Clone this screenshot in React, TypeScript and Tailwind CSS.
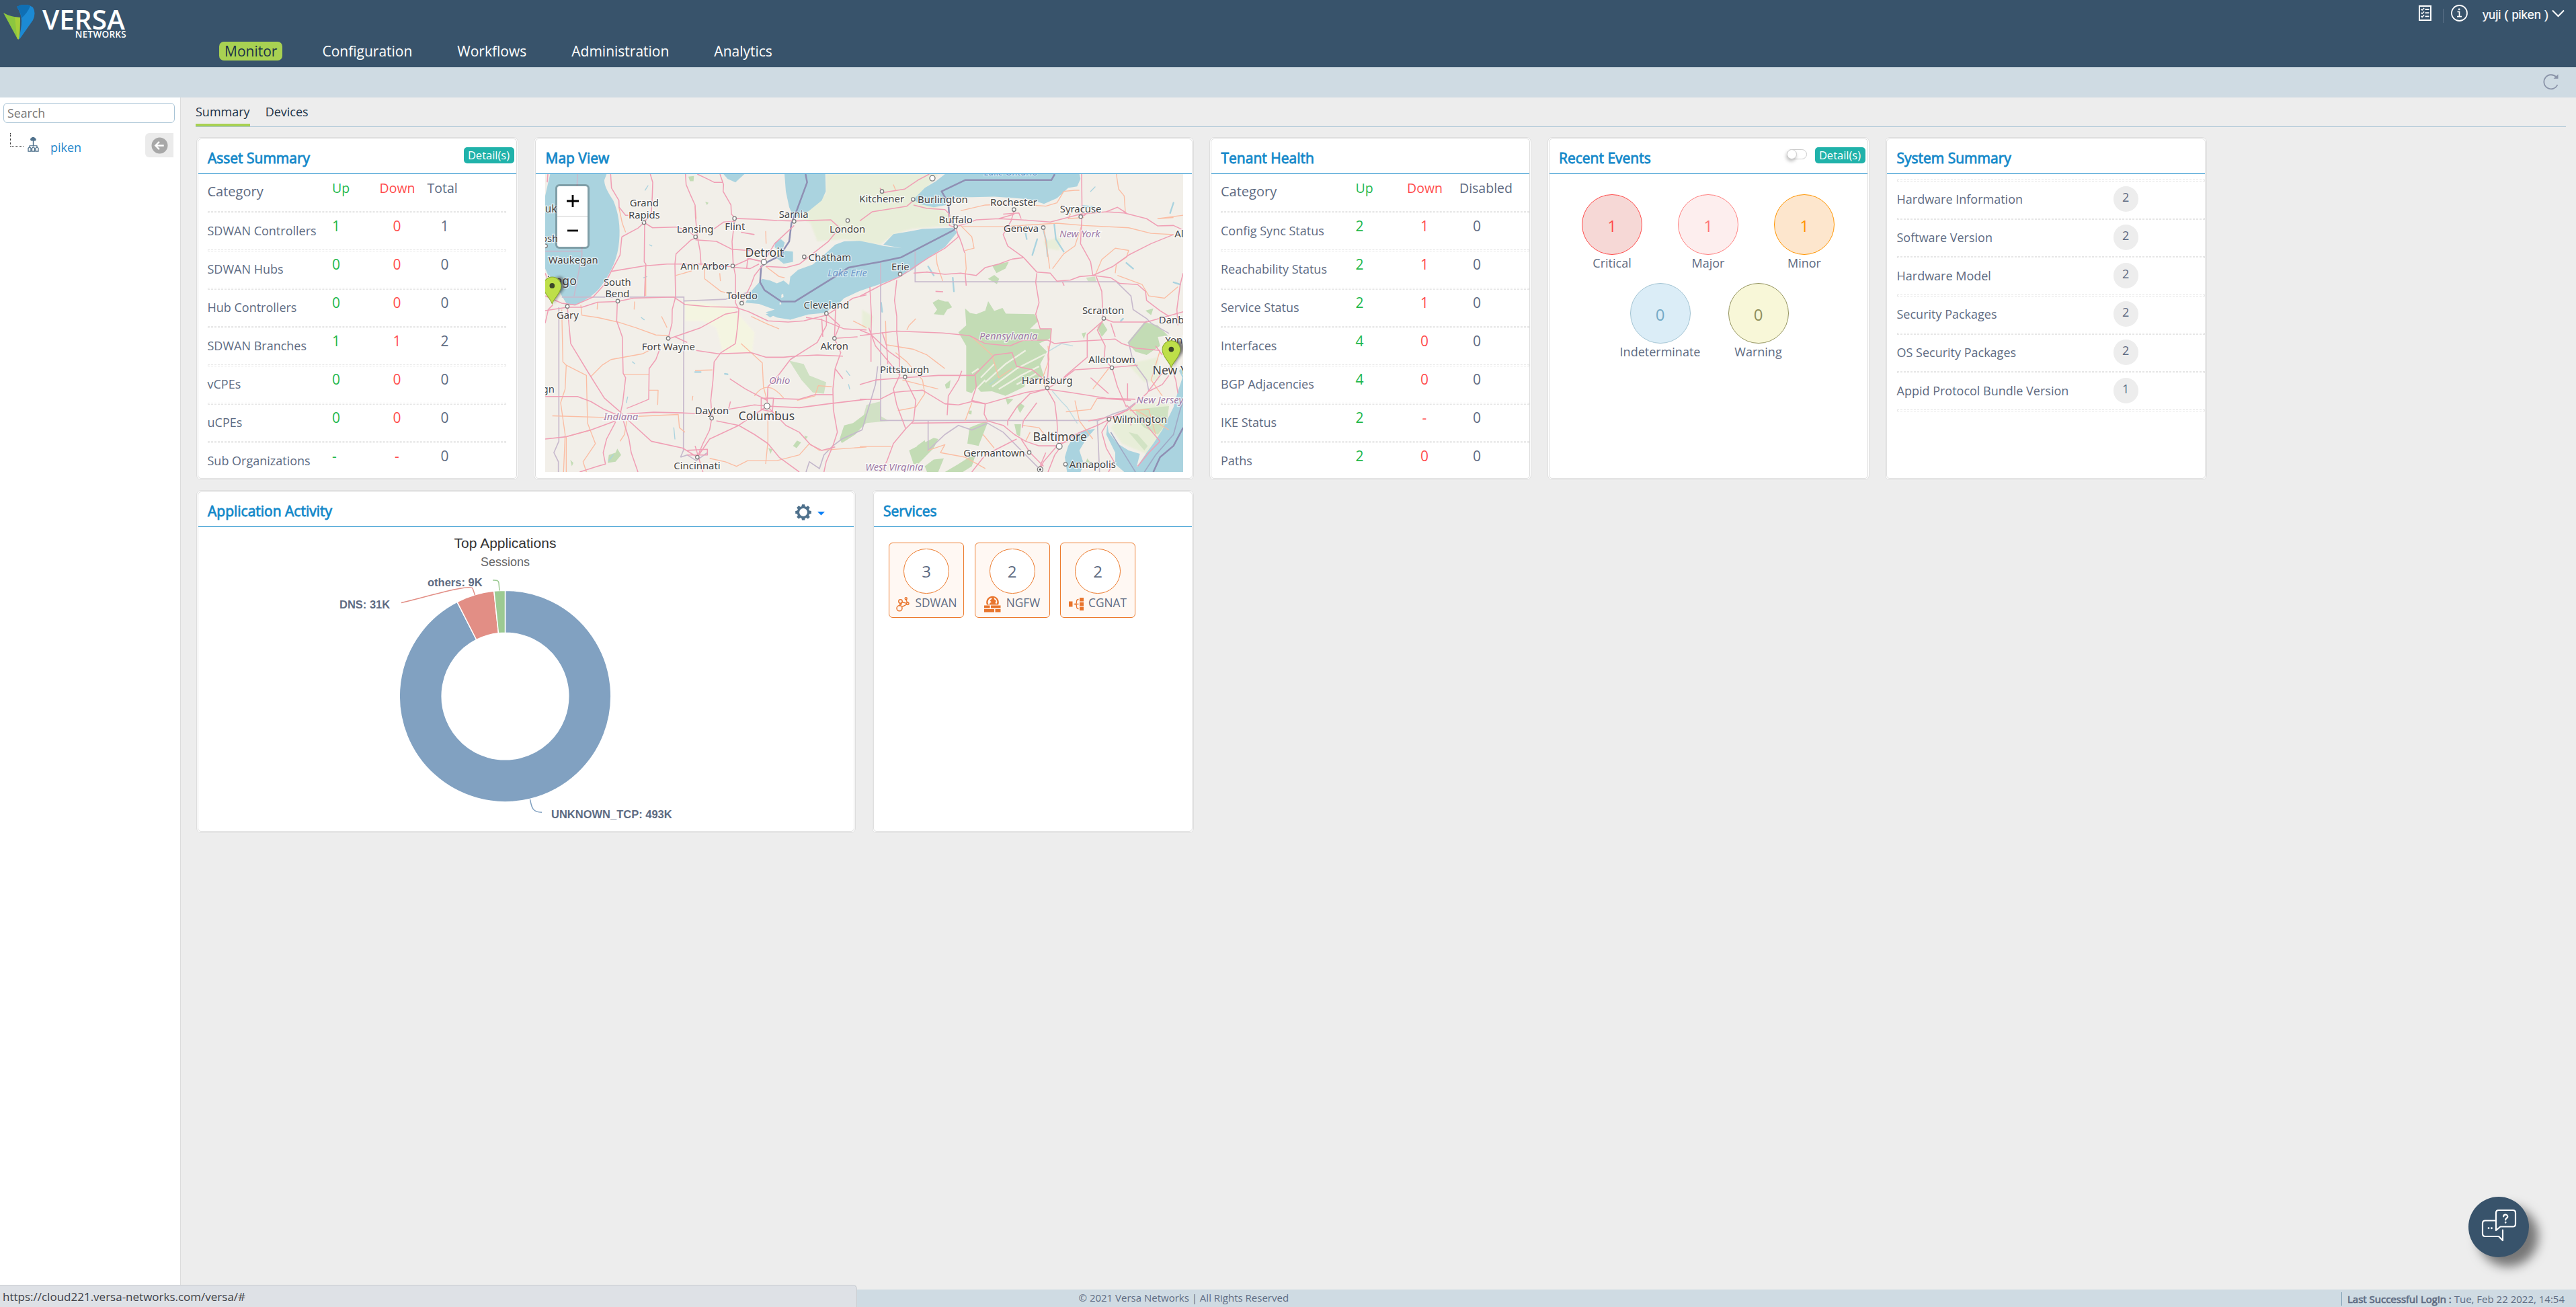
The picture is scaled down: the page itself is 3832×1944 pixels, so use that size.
import React from "react";

const DASH = "h-[3px] shrink-0 border border-dashed border-[#e6e6e6]";

function Logo() {
  return (
    <div className="flex pl-[5px] pt-[7px]">
      <svg width="47" height="52" viewBox="0 0 47 52">
        <path d="M0 12 Q10 18 25 19 L24 50 Q22 53 20 49 Z" fill="#8cc63f" />
        <path d="M17 18.600 L25 19 L24 50 Q22 53 20.500 50 Z" fill="#a6ce39" />
        <path d="M20 3 Q34 -4 44 4 Q49 12 44 23 L25 50 L23 51 Q27 35 27 24 Q27 14 20 3Z" fill="#1c8ad4" />
        <path d="M20 3 Q32 -3 40 2 Q36 12 27 20 Q26 11 20 3Z" fill="#0f6fb4" />
      </svg>
      <div className="ml-[11px] flex w-[125px] flex-col items-end text-white">
        <div className="h-[36px] w-full text-[40.5px] leading-[43px] font-semibold">VERSA</div>
        <div className="text-[13.5px] leading-[17px] font-semibold tracking-[0.3px]">NETWORKS</div>
      </div>
    </div>
  );
}

function Header() {
  return (
    <header className="flex h-[100px] shrink-0 bg-[#38536b]">
      <div className="w-[326px]">
        <Logo />
      </div>
      <nav className="mt-[62px] flex h-[28px] gap-[51px] text-[21px] leading-[28px] text-white">
        {["Monitor", "Configuration", "Workflows", "Administration", "Analytics"].map((t, i) => (
          <span key={t} className={i === 0 ? "rounded-[7px] bg-[#a8d152] px-[8px] text-[#1d3447]" : "px-[8px]"}>
            {t}
          </span>
        ))}
      </nav>
      <div className="ml-auto flex pr-[17px] text-white">
        <svg className="mt-[8px]" width="19" height="23" viewBox="0 0 19 23" fill="none" stroke="#fff">
          <rect x="1" y="1" width="17" height="21" strokeWidth="2" />
          <path d="M9.500 6h6M9.500 11.200h6M9.500 16.400h6" strokeWidth="1.800" />
          <path d="M3.600 5.500l1.500 1.500 3-3M3.600 10.700l1.500 1.500 3-3M3.600 15.900l1.500 1.500 3-3" strokeWidth="1.500" />
        </svg>
        <div className="mt-[13px] ml-[17px] h-[21px] w-px bg-[#5b7187]" />
        <svg className="mt-[6.5px] ml-[11px]" width="25" height="25" viewBox="0 0 25 25" fill="none" stroke="#fff">
          <circle cx="12.500" cy="12.500" r="11.500" strokeWidth="1.800" />
          <path d="M9.500 10.500h3v7M9 17.600h7" strokeWidth="1.700" />
          <circle cx="12.200" cy="6.900" r="1.400" fill="#fff" stroke="none" />
        </svg>
        <span className="mt-[8px] ml-[22px] h-[28px] w-[98px] font-['Liberation_Sans',sans-serif] text-[18.2px] leading-[28px] whitespace-nowrap [-webkit-text-stroke:0.2px_#fff]">
          yuji ( piken )
        </span>
        <svg className="mt-[14px] ml-[5px]" width="19" height="12" viewBox="0 0 19 12" fill="none" stroke="#fff" strokeWidth="2">
          <path d="M1 1.500l8.500 8.500L18 1.500" />
        </svg>
      </div>
    </header>
  );
}

function Sidebar() {
  return (
    <aside className="flex w-[269px] shrink-0 flex-col border-r border-[#dcdcdc] bg-white">
      <div className="mt-[8px] ml-[5px] h-[30px] w-[255px] rounded-[6px] border border-[#a9c4d6] pl-[5px] text-[17.7px] leading-[29px] text-[#757575]">
        Search
      </div>
      <div className="mt-[15px] flex h-[36px] pl-[15px]">
        <div className="h-[20px] w-[20px] border-b border-l border-dotted border-[#333]" />
        <svg className="mt-[6px] ml-[6px]" width="17" height="22" viewBox="0 0 17 22" fill="#4f718c">
          <path d="M5.500 5.500a2.300 2.300 0 0 1 0-4.300A3.300 3.300 0 0 1 11 1.200a2.300 2.300 0 0 1 .500 4.300z" />
          <path d="M7.800 5h1.500v8H7.800zM2.500 12.300h12v1h-12zM2.500 12.300h1v3h-1zM13.500 12.300h1v3h-1z" />
          <path d="M1 21v-4.500l2-2 2 2V21zM6.500 21v-4.500l2-2 2 2V21zM12 21v-4.500l2-2 2 2V21z" fill="none" stroke="#4f718c" strokeWidth="1.300" />
        </svg>
        <span className="ml-[17px] w-[141px] text-[18px] leading-[42px] text-[#1f87cc]">piken</span>
        <div className="flex h-[36px] w-[42px] items-center justify-center rounded-l-[6px] bg-[#ebebeb]">
          <svg width="25" height="25" viewBox="0 0 24 24">
            <circle cx="12" cy="12" r="11.500" fill="#a8a8a8" />
            <path d="M18 12H6.500M11.500 6.500L6 12l5.500 5.500" fill="none" stroke="#fff" strokeWidth="2.200" />
          </svg>
        </div>
      </div>
    </aside>
  );
}

function Card({ title, wide, tools, children }: { title: string; wide?: boolean; tools?: React.ReactNode; children?: React.ReactNode }) {
  return (
    <section
      className={
        (wide ? "w-[981.5px]" : "w-[479px]") +
        " flex h-[509.5px] shrink-0 flex-col overflow-hidden rounded-[7px] border-[3px] border-double border-[#dedede] bg-white"
      }
    >
      <div className="flex h-[52px] shrink-0 border-b border-[#1288c9] pl-[14.5px]">
        <h2 className="text-[21px] leading-[56px] text-[#1288c9] [-webkit-text-stroke:0.8px_#1288c9]">{title}</h2>
        {tools && <div className="ml-auto flex">{tools}</div>}
      </div>
      {children}
    </section>
  );
}

function Details() {
  return (
    <span className="mt-[12px] mr-[3px] h-[24px] w-[75px] rounded-[5px] bg-[#20b2aa] text-center text-[16.5px] leading-[24px] text-white">
      Detail(s)
    </span>
  );
}

type Row = [string, string, string, string];

function StatTable({ rows, last, grid, full }: { rows: Row[]; last: string; grid: string; full?: boolean }) {
  return (
    <div className={full ? "pl-[14px] text-[#5e6b82]" : "pr-[15px] pl-[14px] text-[#5e6b82]"}>
      <div className={"grid h-[54.5px] " + grid}>
        <span className="text-[20px] leading-[52px]">Category</span>
        <span className="text-[19.5px] leading-[41.5px] text-[#1fb84b]">Up</span>
        <span className="text-[19.5px] leading-[41.5px] text-[#ff4b4b]">Down</span>
        <span className="text-[19.5px] leading-[41.5px]">{last}</span>
      </div>
      {rows.map((r) => (
        <React.Fragment key={r[0]}>
          <div className={DASH} />
          <div className={"grid h-[54px] " + grid}>
            <span className="text-[18px] leading-[53px]">{r[0]}</span>
            <span className="text-[21px] leading-[39px] text-[#1fb84b]">{r[1]}</span>
            <span className="w-[52px] text-center text-[21px] leading-[39px] text-[#ff4b4b]">{r[2]}</span>
            <span className="w-[52px] text-center text-[21px] leading-[39px]">{r[3]}</span>
          </div>
        </React.Fragment>
      ))}
    </div>
  );
}

const ASSETS: Row[] = [
  ["SDWAN Controllers", "1", "0", "1"],
  ["SDWAN Hubs", "0", "0", "0"],
  ["Hub Controllers", "0", "0", "0"],
  ["SDWAN Branches", "1", "1", "2"],
  ["vCPEs", "0", "0", "0"],
  ["uCPEs", "0", "0", "0"],
  ["Sub Organizations", "-", "-", "0"],
];

const TENANT: Row[] = [
  ["Config Sync Status", "2", "1", "0"],
  ["Reachability Status", "2", "1", "0"],
  ["Service Status", "2", "1", "0"],
  ["Interfaces", "4", "0", "0"],
  ["BGP Adjacencies", "4", "0", "0"],
  ["IKE Status", "2", "-", "0"],
  ["Paths", "2", "0", "0"],
];

/* ---------- Map ---------- */

type Label = [number, number, string, number?];
const CITIES: Label[] = [
  [508, 345, "Grand"], [508, 398, "Rapids"], [735, 461, "Lansing"], [913, 450, "Flint"], [1175, 395, "Sarnia"],
  [1415, 462, "London"], [1045, 567, "Detroit", 52.700], [1336, 585, "Chatham"], [777, 623, "Ann Arbor"],
  [191, 598, "Waukegan"], [388, 694, "South"], [388, 747, "Bend"], [944, 755, "Toledo"], [1321, 796, "Cleveland"],
  [166, 840, "Gary"], [616, 979, "Fort Wayne"], [1357, 975, "Akron"], [810, 1260, "Dayton"], [1054, 1288, "Columbus", 52.700],
  [744, 1502, "Cincinnati"], [92, 372, "uk", 46], [86, 502, "osh"], [80, 1166, "gn"], [140, 691, "icago", 52.700],
  [1568, 329, "Kitchener"], [1840, 332, "Burlington"], [1898, 419, "Buffalo"], [2157, 343, "Rochester"], [2456, 374, "Syracuse"],
  [2190, 459, "Geneva"], [2946, 482, "Albany"], [1651, 626, "Erie"], [2556, 821, "Scranton"], [2895, 860, "Danbury"],
  [2916, 950, "Yonkers"], [2595, 1037, "Allentown"], [1670, 1079, "Pittsburgh"], [2306, 1126, "Harrisburg"],
  [2893, 1085, "New York", 52.700], [2720, 1298, "Wilmington"], [2363, 1379, "Baltimore", 52.700], [2070, 1448, "Germantown"],
  [2509, 1498, "Annapolis"],
];
const REGIONS: Label[] = [
  [404, 1286, "Indiana"], [1112, 1127, "Ohio"], [2452, 482, "New York"], [2134, 931, "Pennsylvania"], [2809, 1212, "New Jersey"],
  [1624, 1509, "West Virginia"],
];
const DOTS: [number, number, number?][] = [
  [507, 417], [737, 480], [911, 399], [1177, 412], [1416, 408], [1042, 591, 12], [1222, 568], [903, 608], [390, 763], [943, 772],
  [1321, 817], [165, 786], [615, 927], [1357, 927], [809, 1278], [1056, 1225, 13], [745, 1450], [68, 520], [1794, 222, 12],
  [1569, 280], [1708, 315], [1898, 435], [2158, 360], [2456, 391], [2289, 439], [1650, 644], [2559, 839], [2595, 1056],
  [1672, 1097], [2307, 1145], [2582, 1283], [2360, 1402, 13], [2226, 1429], [2388, 1481], [2275, 1504, 12],
];

const ROADS_W = [
  "M358,204L362,265L395,320L396,350L425,385L437,385",
  "M535,204L546,240L544,300L540,370L510,415L508,590L515,600L509,742",
  "M408,480L480,442L508,417L545,440L650,437",
  "M692,204L695,250L712,290L735,340L737,395L745,480L757,540L762,605",
  "M745,204L790,225L820,240L858,240M846,204L862,250L860,280L895,340L897,380L915,400L905,460L900,500L905,600L915,650L915,770L930,800L925,870L915,950",
  "M911,399L1020,403L1100,408L1177,410L1340,405L1380,440L1330,500L1200,600L1140,615L1050,610",
  "M737,485L715,495L650,555L645,600L648,745L633,800L632,860L615,927",
  "M737,493L830,500L900,535L1042,545M820,445L862,415L910,412M650,437L700,450L737,480",
  "M408,480L400,560L362,630L330,690L280,745L200,780L140,772L66,740",
  "M362,632L508,608L610,600L770,600L850,610L903,610L980,576L1042,590L1090,510L1177,430",
  "M66,805L165,790L230,790L300,768L388,765L460,750L640,745L690,778L800,788L915,790L975,810L1060,850L1150,855L1220,850L1321,825L1440,750L1500,735",
  "M912,615L980,620L1020,600M1040,600L1000,650L985,690L945,770M1000,470L940,460M1042,590L970,575L965,620",
  "M615,930L760,880L870,820L925,810M645,920L700,945",
  "M915,950L850,990L820,1030L815,1110L805,1200L810,1270",
  "M740,980L840,995L985,990L1050,1010L1130,1010L1180,1005L1280,1000L1395,1005",
  "M165,790L180,950L260,1080L330,1190L400,1250L440,1290L540,1380L680,1410L745,1450",
  "M66,1183L210,1183L270,1205L330,1240L390,1265M66,1370L160,1360L270,1330L380,1290",
  "M388,765L385,850L410,920L414,1080L425,1100L412,1210L400,1265M575,980L560,1020L530,1060L528,1195L480,1215L430,1235",
  "M430,1260L550,1252L680,1255L800,1260M880,1240L1000,1220L1056,1225L1200,1232L1330,1215L1500,1195",
  "M380,1295L340,1370L325,1430L335,1480L300,1490L220,1515M415,1290L440,1370L450,1430L480,1515",
  "M809,1280L800,1330L770,1390L745,1450M830,1290L930,1310L1000,1350L1060,1390L1110,1450L1200,1515",
  "M1056,1225L930,1310L800,1370L745,1450M1056,1225L1140,1310L1200,1340L1250,1395L1300,1420L1360,1405",
  "M1056,1225L1060,1140L1110,1085L1160,1020L1280,945L1321,870L1321,817M890,1105L960,1150L1056,1200M1056,1190L1200,1195L1270,1175L1350,1175",
  "M1357,927L1362,800M1357,927L1385,990L1360,1060L1350,1150L1352,1240L1370,1340L1350,1400L1320,1470L1310,1515",
  "M1230,835L1300,845L1400,885L1500,890M1321,817L1380,870L1357,927L1460,920M1300,840L1305,920",
  "M700,1420L790,1415L790,1440L700,1440M735,1400L770,1515M1030,1190L1085,1190L1080,1250L1030,1240Z",
  "M78,204L75,240M66,640L90,700M66,860L80,800L100,780M1360,1060L1395,1105M885,1235L893,1205",
];
const ROADS_E = [
  "M0,410L55,370L210,345L240,320M90,265L105,285L200,270L260,230L310,204M240,340L300,355L380,360L400,380L400,430L430,440",
  "M430,440L440,480L380,530L310,570L240,615L180,655L100,690L0,742M440,470L455,510L468,550M430,435L480,420L520,405L620,400L690,380M520,405L620,400L720,405L850,415L985,380L1100,370L1180,375L1280,400L1330,432L1400,430L1443,450",
  "M690,360L675,410L640,470L660,520L730,570L790,635L850,640L880,675L940,670L980,655L1040,650L1120,660L1160,685L1240,690L1275,720L1280,760L1340,805L1380,830",
  "M240,640L300,635L380,645L450,640L520,650L560,615L620,600L680,578L730,572M470,640L475,695M45,700L52,830L50,920L50,1030",
  "M990,204L992,380L985,510L1030,590L1040,650L1130,610L1200,560L1300,510L1400,470M1100,370L1150,350L1190,375M985,395L1010,380M640,380L710,375L720,400",
  "M790,640L785,680L800,770L785,820L805,885L855,885L850,945L840,1000L842,1050L835,1145M1055,655L1080,720L1085,830L1090,840L1130,855L1280,855L1443,810",
  "M165,670L155,760L165,830L165,900L175,990L178,1090L150,1150L165,1220L205,1325L150,1390L120,1470L90,1515",
  "M0,915L120,900L165,895L370,903L490,915L560,950L670,960L730,935L840,935L870,950L960,940L1060,935L1140,930L1170,950L1230,970L1340,980",
  "M0,1130L70,1110L200,1100L350,1090L440,1090L510,1090L600,1000L680,990L700,1050L770,1065L835,1120M0,1195L90,1195L150,1165L200,1160L280,1155L380,1215L440,1220L500,1205L560,1215L650,1190L740,1165L835,1150L940,1165L1100,1190L1230,1195",
  "M515,1090L520,1140L500,1200L560,1215L555,1260L570,1290L640,1310L690,1350L740,1380L800,1400L890,1400M390,1265L395,1180L440,1110L455,1070",
  "M230,1300L400,1298L570,1295M200,1100L250,1200L240,1290L205,1325M100,900L120,960L125,1040M0,890L50,910L130,985L180,1020M40,880L70,960L180,1090",
  "M835,1150L870,1210L880,1290L885,1390M835,1150L760,1170L700,1230L660,1290L660,1310M835,1150L900,1110L960,1065L1125,1055L1240,1045M890,1400L960,1350L1060,1310L1200,1240L1280,1170L1340,1090L1390,1050",
  "M1090,840L1060,890L1095,960L1090,1020L1125,1055L1150,1140L1190,1230M1120,860L1140,920M1085,850L1015,910L1015,1010L920,1090L910,1100",
  "M1200,1240L1130,1270L1020,1290M1190,1220L1280,1310L1340,1380M1110,1290L1080,1340L1100,1410L1135,1470L1110,1515M1340,1380L1290,1430L1240,1490",
  "M880,1400L820,1470L800,1515M900,1400L870,1440L840,1515M830,1430L800,1500M890,1390L930,1380M720,1370L760,1430L820,1490M560,1440L620,1410L700,1370M500,1515L560,1440",
  "M1390,1050L1410,1110L1420,1170M1380,1090L1350,1130L1290,1160M1420,870L1415,800L1430,690L1443,640M1320,960L1350,1000M1210,1270L1210,1310",
  "M725,1320L730,1290L790,1210M1030,1100L1110,1170M1195,1125L1195,1200M1060,1190L1210,1200M905,680L912,695M338,720L372,722",
];
const ORANGE_W = [
  "M395,350L410,420L425,460M515,600L515,740M225,780L230,825L300,835L390,855L470,880L560,912L615,915",
  "M140,800L145,1030L160,1045L155,1150L135,1210L155,1350L148,1515M160,1045L250,1090L255,1300L290,1390L235,1470L250,1515",
  "M270,1095L320,1045L360,1020L500,995L530,980M98,1268L330,1275L400,1272M414,1085L530,1085M480,1270L660,1262L665,1320L690,1340",
  "M775,600L778,665L850,720L910,735M650,650L720,630M740,400L735,345M1050,610L1110,655L1135,660M845,640L848,675M1050,455L1052,510",
  "M530,1155L570,1155L568,1220M735,1068L812,1066M940,950L985,990L1035,1035L1040,1140L1056,1200M1000,1180Q1056,1100 1130,1190",
  "M1060,1250L1060,1380L1050,1480M800,1455L870,1470L920,1490L970,1465L1100,1465L1200,1440L1245,1390L1290,1420L1500,1405",
  "M1345,1140L1285,1135L1270,1180L1190,1200M985,830L1060,865L1110,885M1440,850L1500,880M430,1290L420,1350L400,1380M300,768L298,800M465,765L463,800M270,1330L160,1360L160,1515M725,1180L722,1200M585,830L610,880",
];
const ORANGE_E = [
  "M340,550L345,600L370,675M470,550L475,620L470,650M450,430L500,480L510,530L470,540M450,435L640,435L720,430L880,420L1000,430L1200,440L1300,465L1400,470",
  "M450,365L560,340L700,335L830,345L880,330L910,280L960,275L980,275M820,440L835,530L848,620M990,430L960,520L910,555L860,620M1145,204L1155,270L1180,300L1185,370M1050,650L1080,580L1140,530L1200,540L1190,570L1145,600L1140,640",
  "M115,850L118,955L240,975L300,1000L340,1030L380,1060M160,990L210,1030L280,1110L290,1170L250,1230L170,1245M190,1110L350,1150M500,1210L470,1290M500,920L590,1000L620,1100L680,1060",
  "M900,340L940,380L930,400L1000,395M1400,395L1330,400L1443,385M1150,650L1260,690L1290,740L1360,750L1420,700M725,1310L800,1320L840,1370M305,1420L380,1395L360,1430L470,1450L560,1500M0,1403L140,1403",
  "M840,960L845,1020L820,1090L825,1140M960,1200L980,1290L1040,1370M1110,1060L1040,1150M1340,980L1300,1110L1350,1180M1230,1240L1380,1330M550,1350L600,1410M150,250L160,275",
  "M1060,1190L1030,1240L920,1250M1205,1245L1290,1240L1320,1350M250,840L220,870L210,890M740,1380L760,1340",
];

function Pin({ x, y }: { x: number; y: number }) {
  return (
    <g transform={`translate(${x} ${y})`}>
      <path d="M8,0C20,-40 62,-60 56,-95C50,-125 20,-125 5,-100Z" fill="#222" opacity="0.6" filter="url(#soft)" />
      <path d="M0,0C-10,-28 -40,-48 -40,-78A40,40 0 0 1 40,-78C40,-48 10,-28 0,0Z" fill="#bedf49" stroke="#8aa82f" strokeWidth="3" />
      <circle cx="0" cy="-80" r="11.500" fill="#3d4629" />
    </g>
  );
}

function MapCanvas() {
  return (
    <svg width="949" height="443" viewBox="66 204 2847 1311" preserveAspectRatio="none" className="block">
      <defs>
        <filter id="soft" x="-50%" y="-50%" width="200%" height="200%">
          <feGaussianBlur stdDeviation="7" />
        </filter>
        <filter id="edge" x="-5%" y="-5%" width="110%" height="110%">
          <feGaussianBlur stdDeviation="3" />
        </filter>
      </defs>
      <rect x="66" y="204" width="2847" height="1311" fill="#f2efe9" />
      <g fill="#e8eed8" opacity="0.9" filter="url(#edge)">
        <path d="M1318,204L1820,204L1740,300L1890,400L1880,430L1700,445L1620,470L1560,515L1400,490L1280,500L1250,420L1190,390L1318,290Z" />
        <path d="M690,760L900,790L1000,900L990,990L860,990L830,880L770,850L690,850Z" fill="#f5f6e1" />
        <path d="M2700,1210L2850,1210L2820,1400L2760,1440L2640,1390L2590,1320L2640,1260Z" />
        <path d="M2665,1040L2800,1010L2810,1110L2740,1120Z" />
        <path d="M1480,800L1530,830L1520,880L1480,880Z" />
        <path d="M2290,500L2370,480L2360,540L2300,530Z" />
      </g>
      <g fill="#c3dcb5">
        <path d="M1155,1025L1220,1040L1245,1090L1320,1120L1310,1170L1260,1165L1210,1110Z" opacity="0.75" />
        <path d="M1380,1370L1400,1310L1440,1300L1500,1255L1495,1300L1450,1350L1390,1388Z" />
        <path d="M350,1440L380,1430L388,1412L405,1440L380,1470L345,1475ZM1172,1400L1190,1377L1208,1385L1188,1410ZM178,1462L192,1475L185,1490ZM1062,1410L1080,1415L1072,1435ZM1222,1355L1238,1360L1228,1372ZM705,215L730,212L728,235L712,235ZM780,325L795,330L788,340Z" />
        <path d="M1470,1320L1480,1290L1500,1220L1560,1205L1565,1270L1600,1290L1500,1300Z" opacity="0.7" />
        <g transform="translate(1470 0)">
          <path d="M475,870L470,795L492,815L520,820L560,805L573,763L600,806L637,793L652,818L780,820L797,850L760,885L855,888L852,925L800,950L835,985L805,1040L822,1095L740,1110L735,1140L650,1180L590,1160L540,1162L520,1140L500,1168L475,1160L475,960L440,900Z" />
          <path d="M325,770L350,755L380,765L395,765L412,790L390,800L375,825L330,820L345,800ZM590,605L665,590L650,620L610,640ZM572,665L600,648L622,665L612,688L590,675ZM380,1130L405,1110L400,1145L385,1148ZM700,1225L715,1210L735,1225L715,1255ZM650,1190L685,1195L660,1220ZM488,1245L500,1245L498,1262L486,1260Z" />
          <path d="M1195,945L1270,855L1330,870L1375,915L1330,920L1340,960L1280,1000L1230,985Z" />
          <path d="M1230,1240L1380,1225L1370,1300L1330,1350L1270,1320L1240,1290Z" opacity="0.65" />
          <path d="M1285,1400L1240,1350L1200,1340L1270,1420Z" opacity="0.6" />
          <path d="M1060,880L1080,850L1105,890L1080,920ZM990,905L1010,900L1000,930ZM1275,805L1310,795L1300,825Z" />
          <path d="M220,1420L330,1365L350,1370L330,1410L260,1480L240,1480ZM290,1490L330,1460L375,1455L350,1515L300,1515ZM490,1320L560,1292L570,1300L530,1400L480,1390ZM380,1515L440,1480L520,1430L500,1490L460,1515ZM255,1400L290,1375L300,1415L262,1425ZM690,1305L720,1305L715,1360L700,1350Z" />
          <path d="M1010,660L1050,655L1055,680L1020,678Z" opacity="0.7" />
          <path d="M1015,1455L1040,1490L1010,1470Z" />
        </g>
      </g>
      <g stroke="#eef0e2" strokeWidth="7" fill="none" transform="translate(1470 0)">
        <path d="M590,1140L700,1060L830,995M560,1120L650,1040L740,980M620,1150L720,1090L800,1050M540,1100L600,1040M520,1150L560,1110M700,1130L790,1080M500,1080L530,1060" />
      </g>
      <g fill="#aad3df">
        <path d="M88,204L66,300L66,620L80,650L110,680L140,740L165,780L200,780Q290,740 320,690Q388,600 396,500Q405,400 370,320Q328,260 330,230L340,204Z" />
        <path d="M862,204L880,225L915,240L955,204Z" />
        <path d="M1134,204L1140,280L1155,350L1175,395L1190,395L1200,375L1240,368L1300,320L1318,280L1316,204Z" />
        <path d="M1092,505L1118,490L1135,505L1125,540L1172,545L1172,590L1130,598L1095,570L1115,550L1090,525Z" />
        <path d="M985,720L1035,665L1070,672L1100,685L1130,672L1155,692L1160,655L1195,625L1260,602L1310,560L1360,515L1400,500L1470,498L1540,512L1575,520L1660,530L1575,515L1620,468L1700,455L1750,445L1885,440L1905,460L1850,525L1770,575L1705,625L1650,655L1570,685L1510,705L1470,718L1400,750L1370,780L1310,815L1240,822L1160,845L1100,835L1050,812L1090,800L1020,775L960,770Z" />
        <path d="M1050,820L1075,815L1095,820L1070,835Z" />
        <g transform="translate(1470 0)">
          <path d="M380,204L340,235L290,265L240,315L265,335L330,350L385,340L390,305L500,305L600,303L680,308L760,315L822,335L880,310L930,265L970,258L985,225L980,204Z" />
          <path d="M1443,1050L1425,1070L1440,1100L1420,1160L1400,1230L1350,1330L1310,1390L1280,1430L1235,1495L1250,1435L1200,1420L1150,1390L1110,1340L1105,1305L1100,1350L1140,1430L1140,1480L1180,1515L1443,1515Z" />
          <path d="M990,1335L1050,1325L1010,1370L980,1420L1000,1480L985,1515L925,1515L915,1450L930,1400L960,1350Z" />
          <path d="M990,340L1050,345L1040,355L1000,350Z" />
        </g>
      </g>
      <path d="M1120,735l8,-5l2,15l-10,4ZM1112,770l6,-3l2,10l-8,2Z" fill="#f2efe9" />
      <g fill="none" stroke="#aad3df" strokeWidth="7" strokeLinecap="round">
        <path d="M2338,425L2345,490L2380,545M2290,450L2302,500L2308,565M2262,490L2240,560M2210,465L2215,490M2870,330L2855,375M2870,680L2900,690M1565,770L1570,810M1775,610L1800,650M1885,660L1890,720M735,1075L760,1075M868,1083L880,1085M2645,840L2635,850M2660,595L2690,620" />
        <path d="M512,275L525,255M505,660L520,655M640,1320L645,1370M350,1465L370,1440M532,515L542,520M495,835L508,845M428,1210L434,1185M455,1030L465,1038M1180,1005L1165,1015M2520,260L2500,280M1410,1070L1425,1090M1420,1130L1425,1150" strokeWidth="4" />
        <path d="M2330,1160L2370,1205L2395,1230L2440,1300M2090,1100L2050,1130M2310,985L2370,950L2420,960" strokeWidth="4" opacity="0.7" />
      </g>
      <g fill="none" stroke="#c8bacd" strokeWidth="5">
        <path d="M127,790L127,1380L105,1430L125,1470L125,1515M140,745L685,745L685,760L683,1420L670,1450M685,762L870,755L985,720M66,543L230,543M210,204L207,300M230,520L230,560L195,740" />
        <path d="M670,1450L700,1440L740,1465L790,1430M1230,1515L1245,1470L1290,1500L1310,1440L1350,1400L1390,1370L1480,1330L1540,1130L1550,1050" stroke="#c4b8cc" />
        <path d="M1563,595L1563,1288L2535,1288L2600,1260L2660,1240L2700,1210M1717,545L1717,678L2615,678L2680,740L2690,800L2750,840L2770,860L2850,905M2750,850L2670,945L2690,1030L2750,1110L2760,1160M1775,1290L1775,1420L1850,1350L1910,1310L1970,1330L2040,1300L2110,1340L2170,1400L2275,1504M2530,1290L2540,1515" />
        <path d="M2590,1340L2700,1515M2740,1515L2790,1440L2870,1350L2900,1240L2913,1200" stroke="#9fa9c5" />
      </g>
      <g fill="none" stroke="#8f8fb3" strokeWidth="7.500" strokeLinejoin="round">
        <path d="M1228,204L1235,240L1190,360L1165,420L1155,500L1135,530L1120,560L1060,590L1030,610L1025,680L1045,715L1120,765L1180,765L1360,655L1420,615L1560,590L1655,570L1890,450L1898,435" />
        <path d="M1898,435L1870,400L1865,330L1835,280L1940,230L2325,230L2340,204M2913,1320L2870,1400L2810,1450L2780,1515" />
      </g>
      <g fill="none" stroke="#fbbda3" strokeWidth="4" strokeLinejoin="round">
        {ORANGE_W.map((d) => <path key={d} d={d} />)}
        <g transform="translate(1470 0)">{ORANGE_E.map((d) => <path key={d} d={d} />)}</g>
      </g>
      <g fill="none" stroke="#f09fb5" strokeWidth="4.600" strokeLinejoin="round">
        {ROADS_W.map((d) => <path key={d} d={d} />)}
        <g transform="translate(1470 0)">{ROADS_E.map((d) => <path key={d} d={d} />)}</g>
      </g>
      <g fill="#fff" stroke="#7d7d7d" strokeWidth="4">
        {DOTS.map(([x, y, r]) => <circle key={`${x}-${y}`} cx={x} cy={y} r={r ?? 8} />)}
      </g>
      <circle cx="2275" cy="1504" r="5" fill="#555" />
      <g textAnchor="middle" className="font-['Noto_Sans',sans-serif]" fontSize="44.600" strokeWidth="8" stroke="#fff" strokeOpacity="0.7" paintOrder="stroke">
        {CITIES.map(([x, y, t, s]) => (
          <text key={t} x={x} y={y} fontSize={s ?? 44.6} fill="#444">{t}</text>
        ))}
        <g fill="#a07ba6" fontStyle="italic">
          {REGIONS.map(([x, y, t]) => <text key={t} x={x} y={y}>{t}</text>)}
        </g>
        <g fill="#6f99cb" fontStyle="italic">
          <text x="1415" y="654" strokeOpacity="0.4">Lake Erie</text>
          <text x="2144" y="211" fontSize="42" strokeOpacity="0.4">Lake Ontario</text>
        </g>
      </g>
      <Pin x={97} y={775} />
      <Pin x={2860} y={1055} />
    </svg>
  );
}

function MapView() {
  return (
    <div className="relative ml-[14px] h-[443px] w-[949px] overflow-hidden">
      <MapCanvas />
      <div className="absolute top-[15px] left-[15px] flex w-[51px] flex-col rounded-[6px] border-[3px] border-black/25 bg-white bg-clip-padding">
        <div className="flex h-[45px] items-center justify-center border-b border-[#ccc]">
          <svg width="18" height="18" viewBox="0 0 18 18" stroke="#000" strokeWidth="2.800"><path d="M9 0v18M0 9h18" /></svg>
        </div>
        <div className="flex h-[45px] items-center justify-center pb-[3px]">
          <svg width="16" height="18" viewBox="0 0 16 18" stroke="#000" strokeWidth="2.800"><path d="M0 9h16" /></svg>
        </div>
      </div>
    </div>
  );
}

/* ---------- Recent events ---------- */

function EventDot({ n, label, cls }: { n: string; label: string; cls: string }) {
  return (
    <div className="flex w-[143px] flex-col items-center text-[#5e6b82]">
      <div className={"h-[90px] w-[90px] rounded-full border-[1.5px] text-center text-[24px] leading-[91px] " + cls}>{n}</div>
      <div className="text-[18px] leading-[25px]">{label}</div>
    </div>
  );
}

function RecentEvents() {
  return (
    <div className="flex flex-col items-center pt-[30px]">
      <div className="flex h-[132px]">
        <EventDot n="1" label="Critical" cls="border-[#ff4b4b] bg-[#f6d8d6] text-[#ff4b4b]" />
        <EventDot n="1" label="Major" cls="border-[#ff8181] bg-[#fdeeee] text-[#ff7676]" />
        <EventDot n="1" label="Minor" cls="border-[#ff9500] bg-[#fde6cd] text-[#ff9500]" />
      </div>
      <div className="flex gap-[3px] pl-[3px]">
        <EventDot n="0" label="Indeterminate" cls="border-[#a3c4d3] bg-[#dbedf7] text-[#74aac6]" />
        <EventDot n="0" label="Warning" cls="border-[#94945f] bg-[#f8f7d8] text-[#8f8f5a]" />
      </div>
    </div>
  );
}

/* ---------- System summary ---------- */

const SYSTEM: [string, string][] = [
  ["Hardware Information", "2"],
  ["Software Version", "2"],
  ["Hardware Model", "2"],
  ["Security Packages", "2"],
  ["OS Security Packages", "2"],
  ["Appid Protocol Bundle Version", "1"],
];

function SystemSummary() {
  return (
    <div className="pt-[8px] pl-[14.5px] text-[18px] text-[#5e6b82]">
      {SYSTEM.map(([t, n]) => (
        <React.Fragment key={t}>
          <div className={DASH} />
          <div className="flex h-[54px]">
            <span className="w-[322px] leading-[53px]">{t}</span>
            <span className="mt-[7px] h-[38px] w-[37.5px] rounded-full bg-[#ededed] text-center leading-[32px]">{n}</span>
          </div>
        </React.Fragment>
      ))}
      <div className={DASH} />
    </div>
  );
}

/* ---------- Application activity ---------- */

const SLICES = [
  { value: 493, color: "#81a1c1" },
  { value: 31, color: "#e28e85" },
  { value: 9, color: "#9cca92" },
];

function arc(a0: number, a1: number, R: number, r: number) {
  const p = (a: number, q: number) => `${(q * Math.sin(a)).toFixed(2)},${(-q * Math.cos(a)).toFixed(2)}`;
  const big = a1 - a0 > Math.PI ? 1 : 0;
  return `M${p(a0, R)}A${R},${R} 0 ${big} 1 ${p(a1, R)}L${p(a1, r)}A${r},${r} 0 ${big} 0 ${p(a0, r)}Z`;
}

function Donut() {
  const total = SLICES.reduce((s, x) => s + x.value, 0);
  let acc = 0;
  return (
    <svg width="975" height="451" viewBox="295 784 975 451" className="block font-['Liberation_Sans',sans-serif]">
      <text x="751.500" y="815" textAnchor="middle" fontSize="21" fill="#333">Top Applications</text>
      <text x="751.500" y="841.500" textAnchor="middle" fontSize="18" fill="#666">Sessions</text>
      <g transform="translate(751.5 1035.5)" stroke="#fff" strokeWidth="1.500">
        {SLICES.map((s) => {
          const a0 = (acc / total) * 2 * Math.PI;
          acc += s.value;
          return <path key={s.color} d={arc(a0, (acc / total) * 2 * Math.PI, 157.3, 94.3)} fill={s.color} />;
        })}
      </g>
      <g fill="none" strokeWidth="1.500">
        <path d="M733,863C738,863 741.500,862.500 742,867L743,878.500" stroke="#9cca92" />
        <path d="M597,896.500C640,886 700,868.500 703,875L706.700,885.500" stroke="#e28e85" />
        <path d="M788.500,1189C791,1202.500 793,1208 806,1208.300" stroke="#81a1c1" />
      </g>
      <g fontSize="16.500" fontWeight="700" fill="#5e6b82">
        <text x="636" y="871.800">others: 9K</text>
        <text x="505" y="905">DNS: 31K</text>
        <text x="820" y="1217">UNKNOWN_TCP: 493K</text>
      </g>
    </svg>
  );
}

function GearMenu() {
  return (
    <>
      <svg className="mt-[18px]" width="24" height="24" viewBox="-12 -12 24 24">
        <circle r="7.600" fill="none" stroke="#4f718c" strokeWidth="3.400" />
        {[0, 45, 90, 135, 180, 225, 270, 315].map((a) => (
          <path key={a} d="M-2.800,-8L-2,-11.800H2L2.800,-8Z" fill="#4f718c" transform={`rotate(${a})`} />
        ))}
      </svg>
      <svg className="mt-[28.5px] mr-[43px] ml-[9px]" width="11" height="6" viewBox="0 0 11 6">
        <path d="M0 0h11L5.500 5.500z" fill="#0a7ff5" />
      </svg>
    </>
  );
}

/* ---------- Services ---------- */

function Service({ n, label, icon }: { n: string; label: string; icon: React.ReactNode }) {
  return (
    <div className="flex h-[112px] w-[112px] flex-col items-center rounded-[6px] border border-[#ec7a2c] bg-[#fff8f3] pt-[8px] text-[#5e6b82]">
      <div className="h-[67px] w-[68px] rounded-full border border-[#ec7a2c] bg-white text-center text-[24px] leading-[65px]">{n}</div>
      <div className="flex h-[26px] items-start text-[17.3px] leading-[27px]">
        {icon}
        <span>{label}</span>
      </div>
    </div>
  );
}

const SdwanIcon = (
  <svg className="mt-[5px] mr-[9px]" width="20" height="22" viewBox="0 0 20 22" fill="none" stroke="#e8742c" strokeWidth="1.500">
    <circle cx="5" cy="16.800" r="4" />
    <circle cx="6.500" cy="6.500" r="2.700" />
    <circle cx="14.700" cy="2.300" r="1.500" />
    <circle cx="17.300" cy="9.800" r="1.700" />
    <path d="M6 9.200l-.6 3.600M9 7.500l6.700 1.900M8.500 14.800l7.300-4M14.900 4l1.800 4.200M8 8.500l-1 4" />
  </svg>
);

const NgfwIcon = (
  <svg className="mt-[3px] mr-[8px]" width="25" height="25" viewBox="0 0 25 25" fill="#e8742c">
    <path d="M3.900 13.500A9.300 9.300 0 1 1 21.100 13.500z" />
    <path d="M5.500 10.500q0-5.500 4.500-7l2 .5-3.500 3.500 2.500 2-2.500 1.500-.500 2h-1.500zM14.500 2.700q4.800 2 5 7l-1.500 3-1.500-2.500 1.500-2.500-3-2.500z" fill="#fff8f3" />
    <path d="M0 14.500h8.500v4H0zM10 14.500h14.500v4H10zM0 20h15v4.500H0zM16.500 20h8v4.500h-8z" />
  </svg>
);

const CgnatIcon = (
  <svg className="mt-[6px] mr-[7px]" width="22" height="19" viewBox="0 0 22 19" fill="#e8742c">
    <path d="M0 5.500h5.500v8H0zM16 0h6v5.500h-6zM16 6.800h6v5.400h-6zM16 13.500h6V19h-6z" />
    <path d="M7.500 9.500h7M14.500 2.500q-3 0-3 3.500t-2.500 3.500q2.500 0 2.500 3.500t3 3.500" fill="none" stroke="#e8742c" strokeWidth="1.300" />
  </svg>
);

function ChatButton() {
  return (
    <div className="absolute top-[1780px] left-[3672px] h-[90px] w-[90px] rounded-full bg-[#38536b] shadow-[14px_14px_16px_rgba(0,0,0,0.5)]">
      <svg width="90" height="90" viewBox="0 0 90 90" fill="none" stroke="#fff" strokeWidth="2.200" strokeLinejoin="round" strokeLinecap="round">
        <path d="M41 50V24q0-4 4-4h21q4 0 4 4v16.500q0 4-4 4H47.500z" />
        <path d="M40 35.500H25q-4 0-4 4V55q0 4 4 4h20l6 6V49.500" />
        <path d="M52.200 29.500a3 2.800 0 1 1 4.500 2.300q-1.500 1-1.500 2.700" />
        <path d="M55.200 38.200v.1M30 46.700v.1M34.500 46.700v.1" strokeWidth="2.800" />
      </svg>
    </div>
  );
}

export default function App() {
  return (
    <div className="relative flex h-[1944px] w-[3832px] flex-col overflow-hidden bg-[#ededed] font-['Open_Sans',sans-serif]">
      <Header />
      <div className="flex h-[45px] shrink-0 justify-end bg-[#cfdbe3] pt-[9px] pr-[25px]">
        <svg width="24" height="25" viewBox="0 0 24 25" fill="none" stroke="#8a93a8">
          <path d="M21.500 17A10.500 10.500 0 1 1 19.500 5.500" strokeWidth="1.800" />
          <path d="M22.500 1.500v6.500h-7z" fill="#8a93a8" stroke="none" />
        </svg>
      </div>
      <div className="flex min-h-0 flex-1">
        <Sidebar />
        <main className="flex-1 pl-[22px]">
          <div className="mr-[15px] flex h-[44px] gap-[23px] border-b border-[#a9c4d6] text-[18px] leading-[42px] text-[#1d3447]">
            <span className="h-[43px] border-b-4 border-[#a8d152]">Summary</span>
            <span className="h-[43px]">Devices</span>
          </div>
          <div className="mt-[15px] flex flex-col gap-[15.5px] pl-[0.5px]">
            <div className="flex gap-[23.5px]">
              <Card title="Asset Summary" tools={<Details />}>
                <StatTable rows={ASSETS} last="Total" grid="grid-cols-[185.5px_70.5px_71px_1fr]" />
              </Card>
              <Card title="Map View" wide>
                <MapView />
              </Card>
              <Card title="Tenant Health">
                <StatTable rows={TENANT} last="Disabled" grid="grid-cols-[200.500px_76.500px_78px_1fr]" full />
              </Card>
              <Card
                title="Recent Events"
                tools={
                  <>
                    <span className="mt-[14.5px] mr-[12px] flex h-[15px] w-[30px] rounded-full border border-[#ccc] bg-white">
                      <span className="mt-[-1px] ml-[-1px] h-[15px] w-[15px] rounded-full border border-[#ccc] bg-white shadow-[-1px_3px_5px_rgba(0,0,0,0.25)]" />
                    </span>
                    <Details />
                  </>
                }
              >
                <RecentEvents />
              </Card>
              <Card title="System Summary">
                <SystemSummary />
              </Card>
            </div>
            <div className="flex gap-[23.5px]">
              <Card title="Application Activity" wide tools={<GearMenu />}>
                <Donut />
              </Card>
              <Card title="Services">
                <div className="flex gap-[15.5px] pt-[23px] pl-[22.5px]">
                  <Service n="3" label="SDWAN" icon={SdwanIcon} />
                  <Service n="2" label="NGFW" icon={NgfwIcon} />
                  <Service n="2" label="CGNAT" icon={CgnatIcon} />
                </div>
              </Card>
            </div>
          </div>
        </main>
      </div>
      <footer className="flex h-[26px] shrink-0 bg-[#cfdbe3] text-[15px] text-[#5e6b82]">
        <span className="pl-[1604.5px] leading-[25px]">© 2021 Versa Networks | All Rights Reserved</span>
        <span className="mt-[4px] ml-auto h-[20px] border-l border-[#7e9fb5]" />
        <span className="pr-[17px] pl-[8px] leading-[29px]">
          <span className="[-webkit-text-stroke:0.7px_#5e6b82]">Last Successful Login :</span> Tue, Feb 22 2022, 14:54
        </span>
      </footer>
      <ChatButton />
      <div className="absolute bottom-0 left-0 h-[33px] w-[1275px] rounded-tr-[6px] border-t border-r border-[#c9ccd1] bg-[#dee1e6] pl-[4px] text-[17px] leading-[34px] text-[#3f4247]">
        https://cloud221.versa-networks.com/versa/#
      </div>
    </div>
  );
}
